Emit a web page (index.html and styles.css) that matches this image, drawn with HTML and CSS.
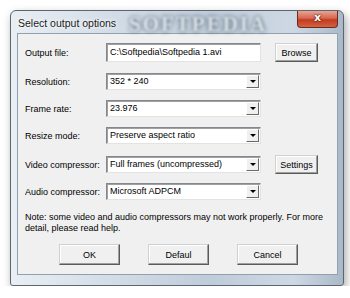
FILE: index.html
```html
<!DOCTYPE html>
<html lang="en">
<head>
    <meta charset="UTF-8">
    <title>Select output options</title>
    <link rel="stylesheet" href="styles.css">
</head>
<body>
    <div class="window">
        <div class="titlebar">
            <span class="title">Select output options</span>
            <span class="mark">SOFTPEDIA</span>
            <span class="close">x</span>
        </div>
        <div class="client">
            <div class="row r1">
                <span class="label">Output file:</span>
                <span class="edit">C:\Softpedia\Softpedia 1.avi</span>
                <span class="btn side">Browse</span>
            </div>
            <div class="row r2">
                <span class="label">Resolution:</span>
                <span class="combo">352 * 240<i class="arrow"></i></span>
            </div>
            <div class="row r3">
                <span class="label">Frame rate:</span>
                <span class="combo">23.976<i class="arrow"></i></span>
            </div>
            <div class="row r4">
                <span class="label">Resize mode:</span>
                <span class="combo">Preserve aspect ratio<i class="arrow"></i></span>
            </div>
            <div class="row r5">
                <span class="label">Video compressor:</span>
                <span class="combo">Full frames (uncompressed)<i class="arrow"></i></span>
                <span class="btn side">Settings</span>
            </div>
            <div class="row r6">
                <span class="label">Audio compressor:</span>
                <span class="combo">Microsoft ADPCM<i class="arrow"></i></span>
            </div>
            <p class="note">Note: some video and audio compressors may not work properly. For more detail, please read help.</p>
            <div class="actions">
                <span class="btn big">OK</span>
                <span class="btn big">Defaul</span>
                <span class="btn big">Cancel</span>
            </div>
        </div>
    </div>
</body>
</html>
```

FILE: styles.css
```css
body {
    margin: 0;
    background: #ffffff;
    font-family: "Liberation Sans", Arial, sans-serif;
    font-size: 9px;
    color: #000;
}
.window {
    margin: 10px 0 0 10px;
    width: 321px;
    height: 269px;
    padding: 0 5px 5px 6px;
    border: 1px solid #5c6670;
    border-radius: 6px 6px 3px 3px;
    background: linear-gradient(90deg, #e9eef3 0%, #d3dde7 30%, #bfccd9 60%, #cdd8e3 85%, #aab9c8 100%);
    box-shadow: 2px 4px 10px rgba(0, 0, 0, 0.35);
}
.titlebar {
    height: 22px;
    display: flex;
    align-items: flex-start;
    position: relative;
}
.title {
    margin: 6px 0 0 1px;
    font-size: 10.5px;
    color: #1a1a1a;
    text-shadow: 0 0 6px #fff, 0 0 3px #fff;
    position: relative;
    z-index: 1;
}
.mark {
    position: absolute;
    left: 112px;
    top: 1px;
    font-family: "Liberation Serif", serif;
    font-weight: bold;
    font-size: 21px;
    letter-spacing: 2px;
    color: #dfe6ec;
    text-shadow: 0 0 4px #4e5d6b, 0 0 4px #4e5d6b;
    filter: blur(1px);
    opacity: 0.7;
}
.close {
    margin-left: auto;
    width: 41px;
    height: 17px;
    box-sizing: border-box;
    border: 1px solid #6b2a22;
    border-top: none;
    border-radius: 0 0 4px 4px;
    background: linear-gradient(#e8a493 0%, #d7674f 45%, #c23a20 55%, #d4633e 100%);
    color: #fff;
    font-family: "DejaVu Sans", sans-serif;
    font-weight: bold;
    font-size: 11px;
    line-height: 14px;
    text-align: center;
    text-shadow: 0 0 2px #4a1208, 0 0 1px #4a1208;
    position: relative;
    z-index: 1;
}
.client {
    height: 242px;
    background: #f0f0f0;
    border: 1px solid #8fa0b1;
    box-sizing: border-box;
    padding: 9px 0 0 7px;
}
.row {
    display: flex;
    align-items: center;
}
.r2 { margin-top: 11px; }
.r3, .r4 { margin-top: 10px; }
.r5 { margin-top: 11px; }
.r6 { margin-top: 9px; }
.label {
    width: 81px;
    flex: none;
    white-space: nowrap;
}
.edit, .combo {
    width: 155px;
    box-sizing: border-box;
    background: #fff;
    border: 1px solid;
    border-color: #828790 #e3e3e3 #e3e3e3 #828790;
    box-shadow: inset 1px 1px 0 #a0a0a0;
    padding-left: 3px;
    white-space: nowrap;
    overflow: hidden;
    position: relative;
}
.edit {
    height: 19px;
    line-height: 17px;
}
.combo {
    height: 17px;
    line-height: 15px;
}
.arrow {
    position: absolute;
    right: 1px;
    top: 1px;
    width: 13px;
    height: 13px;
    box-sizing: border-box;
    background: #f0f0f0;
    border: 1px solid;
    border-color: #fff #696969 #696969 #fff;
}
.arrow::after {
    content: "";
    position: absolute;
    left: 3px;
    top: 4px;
    border-left: 3px solid transparent;
    border-right: 3px solid transparent;
    border-top: 3px solid #000;
}
.btn {
    display: flex;
    align-items: center;
    justify-content: center;
    box-sizing: border-box;
    background: #f0f0f0;
    border: 1px solid;
    border-color: #d0d0d0 #5a5a5a #5a5a5a #d0d0d0;
    box-shadow: inset -1px -1px 0 #a0a0a0, inset 1px 1px 0 #fff;
}
.side {
    margin-left: 14px;
    width: 43px;
    height: 19px;
}
.note {
    margin: 12px 0 0 0;
    width: 300px;
    line-height: 11px;
}
.actions {
    display: flex;
    margin: 10px 0 0 34px;
    gap: 28px;
}
.big {
    width: 61px;
    height: 21px;
}
```
